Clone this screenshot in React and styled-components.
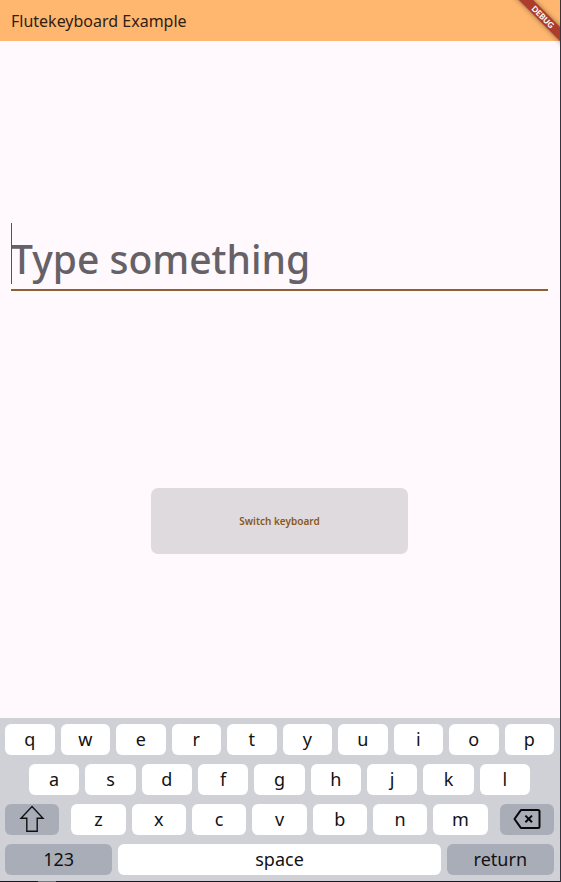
import React, { useState } from "react";
import styled, { createGlobalStyle, css } from "styled-components";

const GlobalStyle = createGlobalStyle`
  *, *::before, *::after { box-sizing: border-box; }
  body { margin: 0; background: #fff9fe; font-family: "Noto Sans", "Open Sans", sans-serif; }
  button, input { font-family: inherit; margin: 0; }
`;

const Window = styled.div`
  position: relative;
  display: flex;
  flex-direction: column;
  min-height: 100vh;
  overflow: hidden;
  border-right: 1px solid #34323c;
  background: #fff9fe;
`;

const AppBar = styled.header`
  display: flex;
  align-items: center;
  height: 41px;
  padding: 0 11px;
  background: #ffb76f;
`;

const Title = styled.h1`
  margin: 0;
  font-size: 16px;
  line-height: 24px;
  font-weight: 400;
  color: #2f2013;
`;

const BannerCorner = styled.div`
  position: absolute;
  top: 0;
  right: 0;
  width: 60px;
  height: 60px;
  overflow: hidden;
  pointer-events: none;
`;

const Ribbon = styled.div`
  position: absolute;
  top: 12px;
  right: -33px;
  width: 100px;
  height: 10px;
  transform: rotate(45deg);
  background: #ac3c2c;
  box-shadow: 0 0 5px rgba(0, 0, 0, 0.5);
  color: #ffffff;
  font-family: Lato, "Noto Sans", sans-serif;
  font-size: 8px;
  line-height: 10px;
  font-weight: 900;
  text-align: center;
`;

const Content = styled.main`
  flex: 1;
  display: flex;
  flex-direction: column;
  align-items: center;
  justify-content: center;
  gap: 197px;
  padding: 18px 12px 0 11px;
`;

const Field = styled.label`
  position: relative;
  display: block;
  width: 100%;
  border-bottom: 2px solid #8c6030;
`;

const Caret = styled.span`
  position: absolute;
  top: 0;
  left: 0;
  width: 1px;
  height: 61px;
  background: #7b4d1c;
`;

const TextInput = styled.input`
  display: block;
  width: 100%;
  height: 66px;
  padding: 4px 0 0;
  border: 0;
  outline: 0;
  background: transparent;
  color: #201b16;
  caret-color: transparent;
  font-size: 39px;
  font-weight: 500;

  &::placeholder { color: #666166; opacity: 1; }
`;

const SwitchButton = styled.button`
  width: 48%;
  height: 66px;
  border: 0;
  border-radius: 7px;
  background: #dfdadd;
  color: #8a5820;
  font-size: 10px;
  line-height: 16px;
  font-weight: 600;
`;

const Keyboard = styled.section`
  display: flex;
  flex-direction: column;
  gap: 9px;
  padding: 6px 6px 6px 5px;
  background: #d0d1d6;
`;

const KeyRow = styled.div`
  display: flex;
  gap: 6px;
  padding: 0 ${(p) => (p.$inset ? 24 : 0)}px;
`;

const Key = styled.button`
  flex: ${(p) => p.$span || 1} 1 0;
  min-width: 0;
  display: flex;
  align-items: center;
  justify-content: center;
  height: 31px;
  padding: 0 0 2px;
  border: 0;
  border-radius: 6px;
  background: #ffffff;
  color: #111114;
  font-size: 18px;
  line-height: 24px;
  ${(p) => p.$muted && css`background: #a9adb7;`}
  ${(p) => p.$apart === "right" && css`margin-right: 6px;`}
  ${(p) => p.$apart === "left" && css`margin-left: 6px;`}
`;

const BottomEdge = styled.div`
  height: 1px;
  background: linear-gradient(to right, #17161f 38px, #77777e 38px 56px, #17161f 56px);
`;

const ShiftIcon = () => (
  <svg width="26" height="28" viewBox="0 0 26 28" fill="none" stroke="#111" strokeWidth="1.4" aria-hidden="true">
    <path d="M13 1.5 L24 13.3 H18.2 V26.2 H7.8 V13.3 H2 Z" />
  </svg>
);

const BackspaceIcon = () => (
  <svg width="28" height="22" viewBox="0 0 28 22" fill="none" stroke="#08080a" strokeWidth="2" aria-hidden="true">
    <path d="M8.5 2 H25 Q26.5 2 26.5 3.5 V18.5 Q26.5 20 25 20 H8.5 Q7.8 20 7.3 19.2 L1.5 11 L7.3 2.8 Q7.8 2 8.5 2 Z" strokeLinejoin="round" />
    <path d="M12.4 7.6 L19 14.2 M19 7.6 L12.4 14.2" />
  </svg>
);

export default function App() {
  const [text, setText] = useState("");
  const type = (value) => setText((t) => t + value);
  const letters = (row) =>
    row.split("").map((c) => (
      <Key key={c} type="button" onClick={() => type(c)}>{c}</Key>
    ));

  return (
    <>
      <GlobalStyle />
      <Window>
        <AppBar>
          <Title>Flutekeyboard Example</Title>
        </AppBar>
        <BannerCorner>
          <Ribbon>DEBUG</Ribbon>
        </BannerCorner>
        <Content>
          <Field>
            <TextInput
              type="text"
              aria-label="Type something"
              placeholder="Type something"
              value={text}
              onChange={(e) => setText(e.target.value)}
            />
            {text === "" && <Caret />}
          </Field>
          <SwitchButton type="button">Switch keyboard</SwitchButton>
        </Content>
        <Keyboard aria-label="Keyboard">
          <KeyRow>{letters("qwertyuiop")}</KeyRow>
          <KeyRow $inset>{letters("asdfghjkl")}</KeyRow>
          <KeyRow>
            <Key type="button" $muted $apart="right" aria-label="Shift"><ShiftIcon /></Key>
            {letters("zxcvbnm")}
            <Key type="button" $muted $apart="left" aria-label="Backspace" onClick={() => setText((t) => t.slice(0, -1))}>
              <BackspaceIcon />
            </Key>
          </KeyRow>
          <KeyRow>
            <Key type="button" $muted>123</Key>
            <Key type="button" $span={3} onClick={() => type(" ")}>space</Key>
            <Key type="button" $muted>return</Key>
          </KeyRow>
        </Keyboard>
        <BottomEdge />
      </Window>
    </>
  );
}
